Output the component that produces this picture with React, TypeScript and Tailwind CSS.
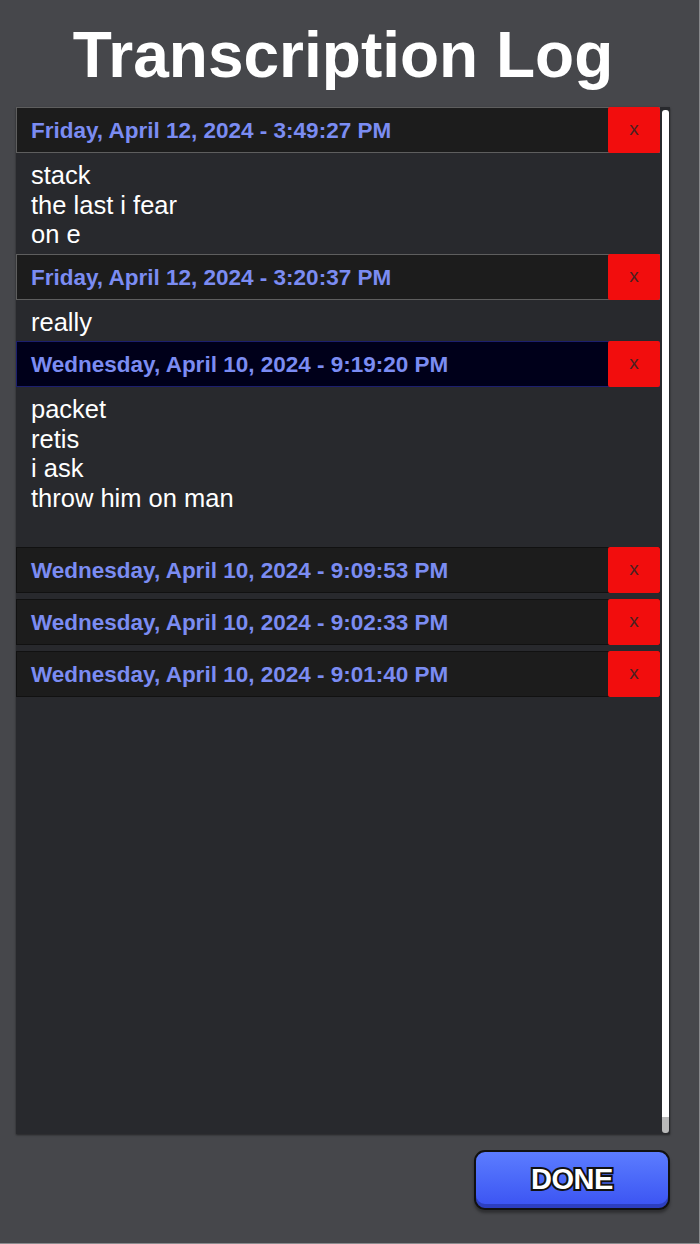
import React from "react";

interface Entry {
  id: number;
  stamp: string;
  text: string;
  state: "open" | "selected" | "closed";
}

const entries: Entry[] = [
  { id: 1, stamp: "Friday, April 12, 2024 - 3:49:27 PM", text: "stack\nthe last i fear\non e", state: "open" },
  { id: 2, stamp: "Friday, April 12, 2024 - 3:20:37 PM", text: "really", state: "open" },
  { id: 3, stamp: "Wednesday, April 10, 2024 - 9:19:20 PM", text: "packet\nretis\ni ask\nthrow him on man\n\u00a0", state: "selected" },
  { id: 4, stamp: "Wednesday, April 10, 2024 - 9:09:53 PM", text: "", state: "closed" },
  { id: 5, stamp: "Wednesday, April 10, 2024 - 9:02:33 PM", text: "", state: "closed" },
  { id: 6, stamp: "Wednesday, April 10, 2024 - 9:01:40 PM", text: "", state: "closed" },
];

function EntryRow({ entry }: { entry: Entry }) {
  const headerTone =
    entry.state === "selected"
      ? "bg-[#00001a] border-[#1c1f6e]"
      : entry.state === "open"
        ? "bg-[#1c1c1c] border-[#5e5e5e]"
        : "bg-[#1c1c1c] border-[#111111]";

  return (
    <li className="flex flex-col">
      <div className={`flex h-[46px] items-stretch border ${headerTone}`}>
        <span className="flex flex-1 items-center pl-[14px] pt-[2px] text-[22.5px] font-bold text-[#7b8cf2]">
          {entry.stamp}
        </span>
        <button
          type="button"
          className="-my-px -mr-px flex w-[52px] items-center justify-center rounded-[2px] bg-[#f20d0d] pb-[1px] text-[19px] text-[#4a2020]"
        >
          x
        </button>
      </div>
      {entry.text ? (
        <p className="-mb-[2px] whitespace-pre-wrap pl-[15px] pt-[8px] text-[25.5px] leading-[29.5px] text-white">
          {entry.text}
        </p>
      ) : null}
    </li>
  );
}

export default function App() {
  return (
    <div className="flex h-[1244px] w-[700px] flex-col border-b border-r border-[#8a8b8e] bg-[#46474b] pl-[16px] pr-[29px] pt-[23px] font-['Liberation_Sans',Arial,sans-serif]">
      <h1 className="mb-[20px] text-center text-[64px] font-bold leading-none text-white">Transcription Log</h1>

      <div className="flex h-[1027px] bg-[#28292d] shadow-[0_1px_2px_rgba(0,0,0,0.5)]">
        <ul className="flex w-[644px] flex-col gap-[6px]">
          {entries.map((entry) => (
            <EntryRow key={entry.id} entry={entry} />
          ))}
        </ul>
        <div className="ml-[2px] flex w-[7px] flex-col pb-[1px] pt-[3px]">
          <div className="flex-1 rounded-t-[3px] bg-white" />
          <div className="h-[16px] rounded-b-[3px] bg-[#b9b9b9]" />
        </div>
      </div>

      <div className="mt-[16px] flex justify-end">
        <button
          type="button"
          className="flex h-[60px] w-[196px] items-center justify-center rounded-[11px] border-2 border-[#111111] bg-gradient-to-b from-[#5c7cff] to-[#3b52f2] shadow-[inset_0_-4px_0_rgba(0,0,40,0.25),0_3px_3px_rgba(0,0,0,0.35)]"
        >
          <span className="text-[29px] font-bold tracking-[-0.5px] text-white [-webkit-text-stroke:4px_#111111] [paint-order:stroke_fill]">
            DONE
          </span>
        </button>
      </div>
    </div>
  );
}
